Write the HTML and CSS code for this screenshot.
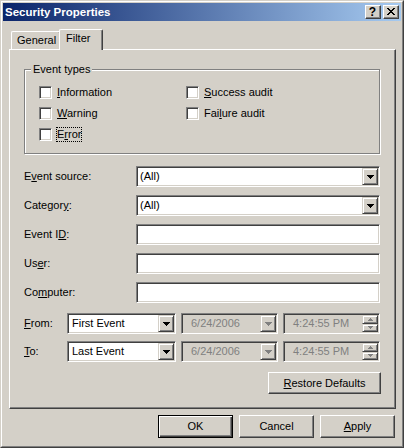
FILE: index.html
```html
<!DOCTYPE html>
<html>
<head>
<meta charset="utf-8">
<title>Security Properties</title>
<link rel="stylesheet" href="styles.css">
</head>
<body>
<div class="window">
  <div class="frame">
    <div class="titlebar">
      <span class="title">Security Properties</span>
      <div class="caption-btns">
        <span class="cbtn help">?</span>
        <span class="cbtn close"><svg width="8" height="7" viewBox="0 0 8 7" shape-rendering="crispEdges"><path d="M0 0h2v1h-2z M6 0h2v1h-2z M1 1h2v1h-2z M5 1h2v1h-2z M2 2h4v1h-4z M3 3h2v1h-2z M2 4h4v1h-4z M1 5h2v1h-2z M5 5h2v1h-2z M0 6h2v1h-2z M6 6h2v1h-2z" fill="#000"/></svg></span>
      </div>
    </div>
    <div class="content">
      <div class="tabs">
        <div class="tab general">General</div>
        <div class="tab active">Filter</div>
      </div>
      <div class="panel">
        <fieldset class="group">
          <legend>Event types</legend>
          <div class="checks">
            <div class="check"><span class="box"></span><span><u>I</u>nformation</span></div>
            <div class="check"><span class="box"></span><span><u>S</u>uccess audit</span></div>
            <div class="check"><span class="box"></span><span><u>W</u>arning</span></div>
            <div class="check"><span class="box"></span><span>Fai<u>l</u>ure audit</span></div>
            <div class="check"><span class="box"></span><span class="focus">E<u>r</u>ror</span></div>
          </div>
        </fieldset>

        <div class="form">
          <span class="lbl">E<u>v</u>ent source:</span>
          <div class="field combo"><span class="val">(All)</span><span class="ddbtn"><svg width="7" height="4" viewBox="0 0 7 4" shape-rendering="crispEdges"><path d="M0 0H7V1H6V2H5V3H4V4H3V3H2V2H1V1H0Z" fill="#000"/></svg></span></div>
          <span class="lbl">Categor<u>y</u>:</span>
          <div class="field combo"><span class="val">(All)</span><span class="ddbtn"><svg width="7" height="4" viewBox="0 0 7 4" shape-rendering="crispEdges"><path d="M0 0H7V1H6V2H5V3H4V4H3V3H2V2H1V1H0Z" fill="#000"/></svg></span></div>
          <span class="lbl">Event I<u>D</u>:</span>
          <div class="field text"></div>
          <span class="lbl">Us<u>e</u>r:</span>
          <div class="field text"></div>
          <span class="lbl">Co<u>m</u>puter:</span>
          <div class="field text"></div>
        </div>

        <div class="range">
          <span class="lbl"><u>F</u>rom:</span>
          <div class="field combo small"><span class="val">First Event</span><span class="ddbtn"><svg width="7" height="4" viewBox="0 0 7 4" shape-rendering="crispEdges"><path d="M0 0H7V1H6V2H5V3H4V4H3V3H2V2H1V1H0Z" fill="#000"/></svg></span></div>
          <div class="field combo disabled"><span class="val">6/24/2006</span><span class="ddbtn"><svg width="7" height="4" viewBox="0 0 7 4" shape-rendering="crispEdges"><path d="M0 0H7V1H6V2H5V3H4V4H3V3H2V2H1V1H0Z" fill="#808080"/></svg></span></div>
          <div class="field spin disabled"><span class="val">4:24:55 PM</span><span class="spinbtns"><span class="sbtn"><svg width="5" height="3" viewBox="0 0 5 3" shape-rendering="crispEdges"><path d="M2 0H3V1H4V2H5V3H0V2H1V1H2Z" fill="#808080"/></svg></span><span class="sbtn"><svg width="5" height="3" viewBox="0 0 5 3" shape-rendering="crispEdges"><path d="M0 0H5V1H4V2H3V3H2V2H1V1H0Z" fill="#808080"/></svg></span></span></div>

          <span class="lbl"><u>T</u>o:</span>
          <div class="field combo small"><span class="val">Last Event</span><span class="ddbtn"><svg width="7" height="4" viewBox="0 0 7 4" shape-rendering="crispEdges"><path d="M0 0H7V1H6V2H5V3H4V4H3V3H2V2H1V1H0Z" fill="#000"/></svg></span></div>
          <div class="field combo disabled"><span class="val">6/24/2006</span><span class="ddbtn"><svg width="7" height="4" viewBox="0 0 7 4" shape-rendering="crispEdges"><path d="M0 0H7V1H6V2H5V3H4V4H3V3H2V2H1V1H0Z" fill="#808080"/></svg></span></div>
          <div class="field spin disabled"><span class="val">4:24:55 PM</span><span class="spinbtns"><span class="sbtn"><svg width="5" height="3" viewBox="0 0 5 3" shape-rendering="crispEdges"><path d="M2 0H3V1H4V2H5V3H0V2H1V1H2Z" fill="#808080"/></svg></span><span class="sbtn"><svg width="5" height="3" viewBox="0 0 5 3" shape-rendering="crispEdges"><path d="M0 0H5V1H4V2H3V3H2V2H1V1H0Z" fill="#808080"/></svg></span></span></div>
        </div>

        <div class="restore-row">
          <span class="btn restore"><u>R</u>estore Defaults</span>
        </div>
      </div>

      <div class="buttons">
        <span class="btn default">OK</span>
        <span class="btn">Cancel</span>
        <span class="btn"><u>A</u>pply</span>
      </div>
    </div>
  </div>
</div>
</body>
</html>
```

FILE: styles.css
```css
* { box-sizing: border-box; }
html, body { margin: 0; padding: 0; }
body {
  font-family: "Liberation Sans", Arial, sans-serif;
  font-size: 11px;
  line-height: 13px;
  color: #000;
  background: #d4d0c8;
}
u { text-decoration: underline; text-underline-offset: 1px; }

.window {
  width: 404px;
  height: 448px;
  border: 1px solid;
  border-color: #d4d0c8 #404040 #404040 #d4d0c8;
  background: #d4d0c8;
}
.frame {
  height: 100%;
  border: 1px solid;
  border-color: #fff #808080 #808080 #fff;
  padding: 1px;
  display: flex;
  flex-direction: column;
}

/* Title bar */
.titlebar {
  height: 18px;
  flex: none;
  display: flex;
  align-items: center;
  justify-content: space-between;
  padding: 0 2px;
  background: linear-gradient(to right, #0a246a, #a6caf0);
}
.title {
  color: #fff;
  font-weight: bold;
  font-size: 11.5px;
  line-height: 18px;
}
.caption-btns { display: flex; gap: 2px; }
.cbtn {
  width: 16px;
  height: 14px;
  background: #d4d0c8;
  border: 1px solid;
  border-color: #fff #404040 #404040 #fff;
  box-shadow: inset -1px -1px #808080;
  display: flex;
  align-items: center;
  justify-content: center;
  font-weight: bold;
  font-size: 12px;
  line-height: 12px;
  padding-right: 1px;
  padding-bottom: 1px;
}

/* Content */
.content {
  flex: 1;
  padding: 7px 5px 0 6px;
}
.tabs {
  display: flex;
  align-items: flex-end;
  height: 21px;
  padding-left: 2px;
}
.tab {
  height: 18px;
  border: 1px solid;
  border-bottom: 0;
  border-color: #fff #404040 #404040 #fff;
  box-shadow: inset -1px 0 #808080;
  border-radius: 2px 2px 0 0;
  padding: 2px 0 0 5px;
  background: #d4d0c8;
}
.tab.general { width: 50px; }
.tab.active {
  width: 44px;
  height: 21px;
  margin-left: -2px;
  margin-bottom: -1px;
  padding-left: 6px;
  position: relative;
  z-index: 1;
}

.panel {
  height: 360px;
  border: 1px solid;
  border-color: #fff #404040 #404040 #fff;
  box-shadow: inset -1px -1px #808080;
  padding: 13px 15px 0 14px;
}

/* Group box */
.group {
  margin: 0;
  min-width: 0;
  border: 1px solid #808080;
  box-shadow: inset 1px 1px #fff, 1px 1px #fff;
  padding: 10px 0 12px 14px;
}
.group legend {
  padding: 0 2px;
  margin-left: -8px;
  line-height: 13px;
  background: #d4d0c8;
}
.checks {
  display: grid;
  grid-template-columns: 147px 1fr;
  row-gap: 8px;
}
.check {
  display: flex;
  align-items: center;
  gap: 5px;
  height: 13px;
}
.box {
  width: 13px;
  height: 13px;
  flex: none;
  background: #fff;
  border: 1px solid;
  border-color: #808080 #fff #fff #808080;
  box-shadow: inset 1px 1px #404040, inset -1px -1px #d4d0c8;
}
.focus {
  outline: 1px dotted #000;
  outline-offset: 0;
}

/* Form fields */
.form {
  margin-top: 12px;
  display: grid;
  grid-template-columns: 112px 1fr;
  row-gap: 8px;
  align-items: center;
}
.field {
  height: 21px;
  background: #fff;
  border: 1px solid;
  border-color: #808080 #fff #fff #808080;
  box-shadow: inset 1px 1px #404040, inset -1px -1px #d4d0c8;
  padding: 1px;
  display: flex;
  align-items: stretch;
}
.field .val {
  flex: 1;
  padding-left: 2px;
  line-height: 17px;
  white-space: nowrap;
  overflow: hidden;
}
.ddbtn {
  width: 16px;
  flex: none;
  background: #d4d0c8;
  border: 1px solid;
  border-color: #d4d0c8 #404040 #404040 #d4d0c8;
  box-shadow: inset 1px 1px #fff, inset -1px -1px #808080;
  display: flex;
  align-items: center;
  justify-content: center;
}
.ddbtn svg { display: block; }

.range {
  margin-top: 10px;
  display: grid;
  grid-template-columns: 38px 109px 97px 1fr;
  column-gap: 5px;
  row-gap: 7px;
  align-items: center;
}
.field.small .val { padding-left: 3px; }
.field.disabled { background: #d4d0c8; }
.field.disabled .val { color: #808080; padding-left: 8px; }
.spinbtns {
  width: 16px;
  flex: none;
  display: flex;
  flex-direction: column;
}
.sbtn {
  flex: 1;
  background: #d4d0c8;
  border: 1px solid;
  border-color: #d4d0c8 #404040 #404040 #d4d0c8;
  box-shadow: inset 1px 1px #fff, inset -1px -1px #808080;
  display: flex;
  align-items: center;
  justify-content: center;
}
.sbtn svg { display: block; }

/* Buttons */
.restore-row {
  margin-top: 10px;
  display: flex;
  justify-content: flex-end;
  margin-right: -1px;
}
.btn {
  height: 23px;
  width: 75px;
  display: flex;
  align-items: center;
  justify-content: center;
  background: #d4d0c8;
  border: 1px solid;
  border-color: #fff #404040 #404040 #fff;
  box-shadow: inset -1px -1px #808080;
  white-space: nowrap;
}
.btn.restore { width: 113px; height: 22px; }
.btn.default {
  border: 1px solid #000;
  box-shadow: inset 1px 1px #fff, inset -1px -1px #404040, inset -2px -2px #808080;
}
.buttons {
  margin-top: 6px;
  margin-right: 1px;
  display: flex;
  justify-content: flex-end;
  gap: 6px;
}
```
